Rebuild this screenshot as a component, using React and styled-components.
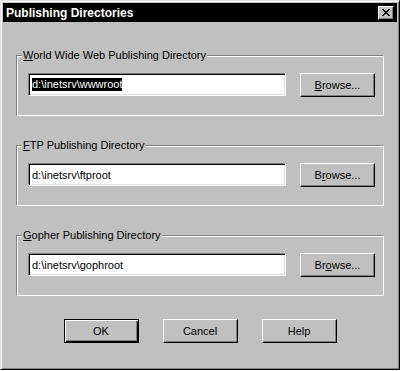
import styled, { createGlobalStyle } from "styled-components"

const GlobalStyle = createGlobalStyle`
    body {
        margin: 0;
        background: #ffffff;
        font-family: "Liberation Sans", Arial, sans-serif;
    }
`

const directories = [
    { key: "W", rest: "orld Wide Web Publishing Directory", path: "d:\\inetsrv\\wwwroot", selected: true, browse: 0 },
    { key: "F", rest: "TP Publishing Directory", path: "d:\\inetsrv\\ftproot", browse: 1 },
    { key: "G", rest: "opher Publishing Directory", path: "d:\\inetsrv\\gophroot", browse: 2 },
]

function BrowseLabel({ at }) {
    const word = "Browse"
    return (
        <>
            {word.slice(0, at)}
            <u>{word[at]}</u>
            {word.slice(at + 1)}...
        </>
    )
}

export default function App() {
    return (
        <>
            <GlobalStyle />
            <Window>
                <TitleBar>
                    <span className="title">Publishing Directories</span>
                    <CloseButton>
                        <svg width="8" height="7" viewBox="0 0 8 7">
                            <path d="M0 0h2v1h1v1h2v-1h1v-1h2v1h-1v1h-1v1h-1v1h1v1h1v1h1v1h-2v-1h-1v-1h-2v1h-1v1h-2v-1h1v-1h1v-1h1v-1h-1v-1h-1v-1h-1z" fill="#000" />
                        </svg>
                    </CloseButton>
                </TitleBar>
                <Body>
                    {directories.map((dir) => (
                        <Group key={dir.key}>
                            <Legend><u>{dir.key}</u>{dir.rest}</Legend>
                            <Row>
                                <Field>
                                    <span className={dir.selected ? "selected" : ""}>{dir.path}</span>
                                </Field>
                                <Button>
                                    <BrowseLabel at={dir.browse} />
                                </Button>
                            </Row>
                        </Group>
                    ))}
                    <Actions>
                        <Button $default>OK</Button>
                        <Button>Cancel</Button>
                        <Button>Help</Button>
                    </Actions>
                </Body>
            </Window>
        </>
    )
}

const Window = styled.div`
    width: 400px;
    height: 370px;
    box-sizing: border-box;
    background: #c0c0c0;
    border: 1px solid;
    border-color: #dfdfdf #000 #000 #dfdfdf;
    box-shadow: inset 1px 1px 0 #fff, inset -1px -1px 0 #808080;
    padding: 2px;
    display: flex;
    flex-direction: column;
`

const TitleBar = styled.div`
    height: 19px;
    background: #000;
    display: flex;
    align-items: center;
    justify-content: space-between;
    padding: 0 3px 0 3px;

    .title {
        color: #fff;
        font-weight: bold;
        font-size: 12px;
    }
`

const CloseButton = styled.div`
    width: 16px;
    height: 14px;
    box-sizing: border-box;
    background: #c0c0c0;
    border: 1px solid;
    border-color: #fff #000 #000 #fff;
    box-shadow: inset -1px -1px 0 #808080;
    display: flex;
    align-items: center;
    justify-content: center;
    padding-right: 1px;
`

const Body = styled.div`
    display: flex;
    flex-direction: column;
    gap: 29px;
    padding: 33px 13px 0 13px;
`

const Group = styled.div`
    position: relative;
    height: 61px;
    box-sizing: border-box;
    border: 1px solid;
    border-color: #808080 #fff #fff #808080;
    box-shadow: inset 1px 1px 0 #fff, 1px 1px 0 #808080 inset;
    padding: 16px 8px 0 11px;
`

const Legend = styled.span`
    position: absolute;
    left: 5px;
    top: -8px;
    padding: 0 1px;
    background: #c0c0c0;
    font-size: 11px;
    line-height: 14px;
    color: #000;
`

const Row = styled.div`
    display: flex;
    align-items: center;
    justify-content: space-between;
    height: 25px;
`

const Field = styled.div`
    width: 258px;
    height: 23px;
    box-sizing: border-box;
    background: #fff;
    border: 1px solid;
    border-color: #808080 #fff #fff #808080;
    box-shadow: inset 1px 1px 0 #000, inset -1px -1px 0 #dfdfdf;
    display: flex;
    align-items: center;
    padding-left: 3px;
    font-size: 11px;
    color: #000;

    .selected {
        background: #000;
        color: #fff;
        line-height: 13px;
    }
`

const Button = styled.div`
    width: 75px;
    height: 24px;
    box-sizing: border-box;
    background: #c0c0c0;
    border: 1px solid;
    border-color: ${(p) => (p.$default ? "#000" : "#fff #000 #000 #fff")};
    box-shadow: ${(p) =>
        p.$default
            ? "inset 1px 1px 0 #fff, inset -1px -1px 0 #000, inset -2px -2px 0 #808080"
            : "inset -1px -1px 0 #808080"};
    display: flex;
    align-items: center;
    justify-content: center;
    font-size: 11px;
    color: #000;
`

const Actions = styled.div`
    display: flex;
    justify-content: center;
    gap: 24px;
    margin-top: -6px;
`
